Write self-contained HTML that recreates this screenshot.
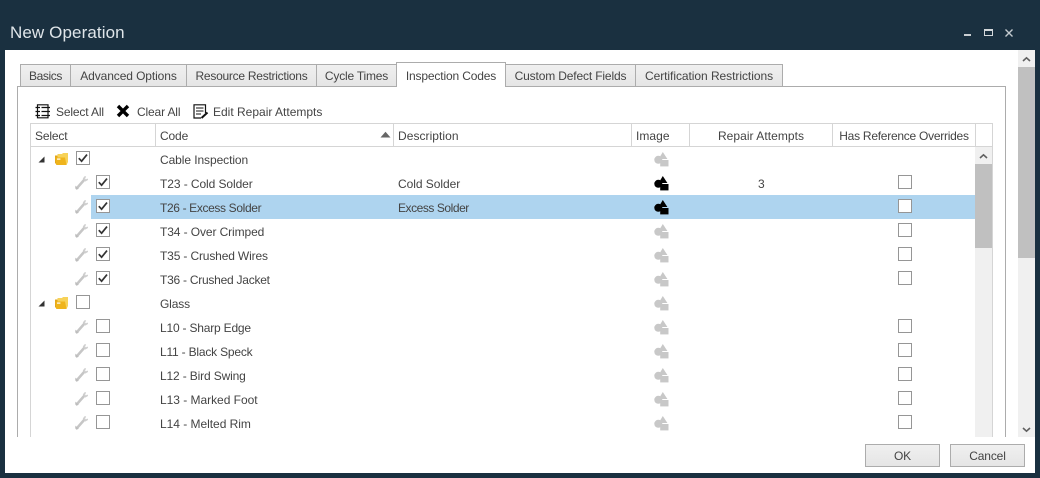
<!DOCTYPE html>
<html><head><meta charset="utf-8"><style>
html,body{margin:0;padding:0;width:1040px;height:478px;overflow:hidden;background:#1a3040}
*{box-sizing:border-box}
div,span,svg{position:absolute}
body{font:12px/16px "Liberation Sans",sans-serif;color:#444;letter-spacing:-.15px}
.t{white-space:nowrap}
.tab{top:64px;height:23px;border:1px solid #acacac;border-left:0;border-bottom:1px solid #acacac;background:linear-gradient(#f0f0f0,#e5e5e5);text-align:center;line-height:22px;white-space:nowrap}
.hc{top:124px;height:23px;border-right:1px solid #d5d5d5;line-height:24px;white-space:nowrap}
.cb{width:14px;height:14px;border:1px solid #969696;background:#fff}
.row{left:91px;width:884px;height:24px}
.l{left:160px;line-height:16px;white-space:nowrap}
</style></head><body>
<svg width="0" height="0" style="left:0;top:0">
<defs>
<symbol id="shape" viewBox="0 0 15 15"><circle cx="4.3" cy="7.8" r="4"/><path d="M8.8 0L13.4 7H4.6Z"/><rect x="6.2" y="8" width="8.3" height="6.4"/></symbol>
<symbol id="wr" viewBox="0 0 13 14"><path d="M2.2 11.8L9.4 3.6" stroke="#c6c6c6" stroke-width="2.6" fill="none" stroke-linecap="round"/><path d="M10.6 0.4L8.8 2.4 10.4 4.6 12.8 3.2" stroke="#cfcfcf" stroke-width="1.6" fill="none"/><path d="M0.4 9.6L3.8 12.8 1.4 13.8 0.2 12.2Z" fill="#bdbdbd"/></symbol>
<symbol id="ck" viewBox="0 0 14 14"><path d="M2.8 7.2L5.6 10.2 11 3.6" stroke="#333" stroke-width="1.7" fill="none"/></symbol>
<symbol id="fo" viewBox="0 0 13 12"><path d="M0 2.5H4L5 1.5H8V11H1L0 10Z" fill="#e2a51a"/><path d="M2.5 2.5V1H7L8 0H13V9L11.5 12H2.5Z" fill="#f7d258"/><path d="M.5 4.5H10L11.5 12H1.2Z" fill="#efb41c"/><rect x="2" y="5.5" width="3.4" height="1.2" fill="#fff"/></symbol>
</defs></svg>

<div class="t" style="left:10px;top:22px;font-size:17px;line-height:22px;color:#dfe5e9;letter-spacing:.1px">New Operation</div>
<div style="left:964px;top:34px;width:7px;height:2px;background:#c9ced2"></div>
<div style="left:984px;top:29px;width:9px;height:7px;border:1px solid #d4d8db;border-top-width:2px"></div>
<svg style="left:1004px;top:28px" width="10" height="10"><path d="M1.5 1.5L8.5 8.5M8.5 1.5L1.5 8.5" stroke="#c4cacf" stroke-width="1.4"/></svg>

<div style="left:5px;top:50px;width:1030px;height:423px;background:#fff"></div>

<!-- outer scrollbar -->
<div style="left:1018px;top:50px;width:17px;height:387px;background:#f0f0f0"></div>
<div style="left:1018px;top:67px;width:17px;height:191px;background:#c0c0c0"></div>
<svg style="left:1022px;top:56px" width="9" height="6"><path d="M1 5L4.5 1.8 8 5" stroke="#606060" stroke-width="1.6" fill="none"/></svg>
<svg style="left:1022px;top:427px" width="9" height="6"><path d="M1 1L4.5 4.2 8 1" stroke="#606060" stroke-width="1.6" fill="none"/></svg>

<!-- tab panel -->
<div style="left:17px;top:86px;width:989px;height:351px;border:1px solid #acacac;border-bottom:0;background:#fff"></div>

<!-- tabs -->
<div class="tab" style="left:20px;width:51px;border-left:1px solid #acacac;letter-spacing:-.4px">Basics</div>
<div class="tab" style="left:71px;width:116px;letter-spacing:-.1px">Advanced Options</div>
<div class="tab" style="left:187px;width:130px;letter-spacing:-.26px">Resource Restrictions</div>
<div class="tab" style="left:317px;width:80px;letter-spacing:-.2px">Cycle Times</div>
<div class="tab" style="left:396px;top:62px;width:110px;height:25px;border-left:1px solid #acacac;border-bottom:0;background:#fff;line-height:27px">Inspection Codes</div>
<div class="tab" style="left:506px;width:130px">Custom Defect Fields</div>
<div class="tab" style="left:636px;width:147px;letter-spacing:-.05px">Certification Restrictions</div>

<!-- toolbar -->
<svg style="left:35px;top:104px" width="16" height="15" fill="none" stroke="#111"><path d="M2.5 .8H13V13.8H2.5Z" stroke-width="1.2"/><path d="M.5 3.5H5M.5 7.5H5M.5 11.5H5M6.5 3.5H15M6.5 7.5H15M6.5 11.5H15" stroke-width="1.2"/></svg>
<div class="t" style="left:56px;top:104px">Select All</div>
<svg style="left:116px;top:104px" width="14" height="14"><path d="M2 2L12 12M12 2L2 12" stroke="#000" stroke-width="3.4"/></svg>
<div class="t" style="left:137px;top:104px">Clear All</div>
<svg style="left:193px;top:104px" width="16" height="16" fill="none" stroke="#111"><path d="M12.5 9V.8H1V14H8" stroke-width="1.2"/><path d="M3 4H10.5M3 7H10.5M3 10H8" stroke-width="1.1"/><path d="M8.5 14L14.5 8.5" stroke-width="2"/></svg>
<div class="t" style="left:213px;top:104px;letter-spacing:0">Edit Repair Attempts</div>

<!-- grid frame -->
<div style="left:30px;top:123px;width:963px;height:314px;border:1px solid #d5d5d5;border-bottom:0"></div>
<div style="left:31px;top:146px;width:961px;height:1px;background:#d5d5d5"></div>
<div class="hc" style="left:31px;width:125px;padding-left:4px">Select</div>
<div class="hc" style="left:156px;width:238px;padding-left:4px">Code</div>
<svg style="left:380px;top:131px" width="11" height="7"><path d="M.5 6.5L5.5 .8 10.5 6.5Z" fill="#666"/></svg>
<div class="hc" style="left:394px;width:238px;padding-left:4px;letter-spacing:.05px">Description</div>
<div class="hc" style="left:632px;width:58px;padding-left:4px;letter-spacing:.05px">Image</div>
<div class="hc" style="left:690px;width:143px;text-align:center;letter-spacing:.05px">Repair Attempts</div>
<div class="hc" style="left:833px;width:143px;text-align:center;letter-spacing:-.26px">Has Reference Overrides</div>

<!-- inner scrollbar -->
<div style="left:975px;top:147px;width:17px;height:290px;background:#f0f0f0"></div>
<div style="left:975px;top:164px;width:17px;height:84px;background:#c0c0c0"></div>
<svg style="left:979px;top:153px" width="9" height="6"><path d="M1 5L4.5 1.8 8 5" stroke="#606060" stroke-width="1.6" fill="none"/></svg>

<!-- selected row -->
<div class="row" style="top:195px;background:#aed4ef"></div>

<!-- group 1 -->
<svg style="left:38px;top:156px" width="7" height="7"><path d="M6.5 .5V6.5H.5Z" fill="#333"/></svg>
<svg style="left:55px;top:153px" width="13" height="12"><use href="#fo"/></svg>
<div class="cb" style="left:76px;top:151px"></div><svg style="left:76px;top:151px" width="14" height="14"><use href="#ck"/></svg>
<div class="l" style="top:152px;letter-spacing:-.08px">Cable Inspection</div>
<svg style="left:654px;top:152px" width="15" height="15" fill="#c8c8c8"><use href="#shape"/></svg>

<!-- T23 -->
<svg style="left:75px;top:176px" width="13" height="14"><use href="#wr"/></svg>
<div class="cb" style="left:96px;top:175px"></div><svg style="left:96px;top:175px" width="14" height="14"><use href="#ck"/></svg>
<div class="l" style="top:176px;letter-spacing:-.08px">T23 - Cold Solder</div>
<div class="t" style="left:398px;top:176px;letter-spacing:-.05px">Cold Solder</div>
<svg style="left:654px;top:176px" width="15" height="15" fill="#000"><use href="#shape"/></svg>
<div class="t" style="left:758px;top:176px">3</div>
<div class="cb" style="left:898px;top:175px"></div>

<!-- T26 -->
<svg style="left:75px;top:200px" width="13" height="14"><use href="#wr"/></svg>
<div class="cb" style="left:96px;top:199px"></div><svg style="left:96px;top:199px" width="14" height="14"><use href="#ck"/></svg>
<div class="l" style="top:200px;letter-spacing:-.36px">T26 - Excess Solder</div>
<div class="t" style="left:398px;top:200px;letter-spacing:-.45px">Excess Solder</div>
<svg style="left:654px;top:200px" width="15" height="15" fill="#000"><use href="#shape"/></svg>
<div class="cb" style="left:898px;top:199px"></div>

<!-- T34 -->
<svg style="left:75px;top:224px" width="13" height="14"><use href="#wr"/></svg>
<div class="cb" style="left:96px;top:223px"></div><svg style="left:96px;top:223px" width="14" height="14"><use href="#ck"/></svg>
<div class="l" style="top:224px;letter-spacing:-.1px">T34 - Over Crimped</div>
<svg style="left:654px;top:224px" width="15" height="15" fill="#c8c8c8"><use href="#shape"/></svg>
<div class="cb" style="left:898px;top:223px"></div>

<!-- T35 -->
<svg style="left:75px;top:248px" width="13" height="14"><use href="#wr"/></svg>
<div class="cb" style="left:96px;top:247px"></div><svg style="left:96px;top:247px" width="14" height="14"><use href="#ck"/></svg>
<div class="l" style="top:248px">T35 - Crushed Wires</div>
<svg style="left:654px;top:248px" width="15" height="15" fill="#c8c8c8"><use href="#shape"/></svg>
<div class="cb" style="left:898px;top:247px"></div>

<!-- T36 -->
<svg style="left:75px;top:272px" width="13" height="14"><use href="#wr"/></svg>
<div class="cb" style="left:96px;top:271px"></div><svg style="left:96px;top:271px" width="14" height="14"><use href="#ck"/></svg>
<div class="l" style="top:272px;letter-spacing:-.25px">T36 - Crushed Jacket</div>
<svg style="left:654px;top:272px" width="15" height="15" fill="#c8c8c8"><use href="#shape"/></svg>
<div class="cb" style="left:898px;top:271px"></div>

<!-- group 2 -->
<svg style="left:38px;top:300px" width="7" height="7"><path d="M6.5 .5V6.5H.5Z" fill="#333"/></svg>
<svg style="left:55px;top:297px" width="13" height="12"><use href="#fo"/></svg>
<div class="cb" style="left:76px;top:295px"></div>
<div class="l" style="top:296px">Glass</div>
<svg style="left:654px;top:296px" width="15" height="15" fill="#c8c8c8"><use href="#shape"/></svg>

<!-- L10 -->
<svg style="left:75px;top:320px" width="13" height="14"><use href="#wr"/></svg>
<div class="cb" style="left:96px;top:319px"></div>
<div class="l" style="top:320px;letter-spacing:-.2px">L10 - Sharp Edge</div>
<svg style="left:654px;top:320px" width="15" height="15" fill="#c8c8c8"><use href="#shape"/></svg>
<div class="cb" style="left:898px;top:319px"></div>

<!-- L11 -->
<svg style="left:75px;top:344px" width="13" height="14"><use href="#wr"/></svg>
<div class="cb" style="left:96px;top:343px"></div>
<div class="l" style="top:344px;letter-spacing:-.2px">L11 - Black Speck</div>
<svg style="left:654px;top:344px" width="15" height="15" fill="#c8c8c8"><use href="#shape"/></svg>
<div class="cb" style="left:898px;top:343px"></div>

<!-- L12 -->
<svg style="left:75px;top:368px" width="13" height="14"><use href="#wr"/></svg>
<div class="cb" style="left:96px;top:367px"></div>
<div class="l" style="top:368px">L12 - Bird Swing</div>
<svg style="left:654px;top:368px" width="15" height="15" fill="#c8c8c8"><use href="#shape"/></svg>
<div class="cb" style="left:898px;top:367px"></div>

<!-- L13 -->
<svg style="left:75px;top:392px" width="13" height="14"><use href="#wr"/></svg>
<div class="cb" style="left:96px;top:391px"></div>
<div class="l" style="top:392px;letter-spacing:-.03px">L13 - Marked Foot</div>
<svg style="left:654px;top:392px" width="15" height="15" fill="#c8c8c8"><use href="#shape"/></svg>
<div class="cb" style="left:898px;top:391px"></div>

<!-- L14 -->
<svg style="left:75px;top:416px" width="13" height="14"><use href="#wr"/></svg>
<div class="cb" style="left:96px;top:415px"></div>
<div class="l" style="top:416px;letter-spacing:-.03px">L14 - Melted Rim</div>
<svg style="left:654px;top:416px" width="15" height="15" fill="#c8c8c8"><use href="#shape"/></svg>
<div class="cb" style="left:898px;top:415px"></div>

<!-- buttons -->
<div style="left:865px;top:444px;width:75px;height:23px;border:1px solid #acacac;background:linear-gradient(#f0f0f0,#e5e5e5);text-align:center;line-height:22px">OK</div>
<div style="left:950px;top:444px;width:75px;height:23px;border:1px solid #acacac;background:linear-gradient(#f0f0f0,#e5e5e5);text-align:center;line-height:22px">Cancel</div>
</body></html>
